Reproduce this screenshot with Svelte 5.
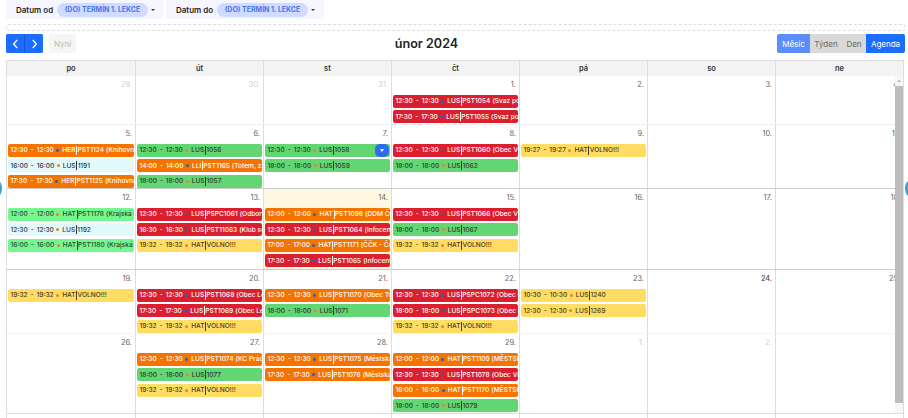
<script>
  const dayNames = ["po", "út", "st", "čt", "pá", "so", "ne"];

  // kind: r = red, o = orange, g = green, l = light green, c = cyan, y = yellow
  const ev = (kind, time, who, code, note = "") => ({ kind, time, who, code, note });

  const weeks = [
    {
      cls: "w1",
      days: [
        { n: "29.", off: true },
        { n: "30.", off: true },
        { n: "31.", off: true },
        {
          n: "1.",
          events: [
            ev("r", "12:30 - 12:30", "LUS", "PST1054", "(Svaz postižených civilizačními)"),
            ev("r", "17:30 - 17:30", "LUS", "PST1055", "(Svaz postižených civilizačními)"),
          ],
        },
        { n: "2." },
        { n: "3." },
        { n: "4." },
      ],
    },
    {
      cls: "w2",
      days: [
        {
          n: "5.",
          events: [
            ev("o", "12:30 - 12:30", "HER", "PST1124", "(Knihovna města Plzně)"),
            ev("c", "16:00 - 16:00", "LUS", "1191"),
            ev("o", "17:30 - 17:30", "HER", "PST1125", "(Knihovna města Plzně)"),
          ],
        },
        {
          n: "6.",
          events: [
            ev("g", "12:30 - 12:30", "LUS", "1056"),
            ev("o", "14:00 - 14:00", "LLI", "PST1165", "(Totem, z.s. Plzeň)"),
            ev("g", "18:00 - 18:00", "LUS", "1057"),
          ],
        },
        {
          n: "7.",
          events: [ev("g", "12:30 - 12:30", "LUS", "1058"), ev("g", "18:00 - 18:00", "LUS", "1059")],
          menu: true,
        },
        {
          n: "8.",
          events: [
            ev("r", "12:30 - 12:30", "LUS", "PST1060", "(Obec Vinařice u Kladna)"),
            ev("g", "18:00 - 18:00", "LUS", "1062"),
          ],
        },
        { n: "9.", events: [ev("y", "19:27 - 19:27", "HAT", "VOLNO!!!")] },
        { n: "10." },
        { n: "11." },
      ],
    },
    {
      cls: "w3",
      days: [
        {
          n: "12.",
          events: [
            ev("l", "12:00 - 12:00", "HAT", "PST1178", "(Krajská vědecká knihovna)"),
            ev("c", "12:30 - 12:30", "LUS", "1192"),
            ev("l", "16:00 - 16:00", "HAT", "PST1180", "(Krajská vědecká knihovna)"),
          ],
        },
        {
          n: "13.",
          events: [
            ev("r", "12:30 - 12:30", "LUS", "PSPC1061", "(Odbor sociálních věcí)"),
            ev("r", "16:30 - 16:30", "LUS", "PST11063", "(Klub seniorů Plzeň)"),
            ev("y", "19:32 - 19:32", "HAT", "VOLNO!!!"),
          ],
        },
        {
          n: "14.",
          today: true,
          events: [
            ev("o", "12:00 - 12:00", "HAT", "PST1098", "(DDM Čelákovice)"),
            ev("r", "12:30 - 12:30", "LUS", "PST1064", "(Infocentrum Beroun)"),
            ev("o", "17:00 - 17:00", "HAT", "PST1171", "(ČČK - Český červený)"),
            ev("r", "17:30 - 17:30", "LUS", "PST1065", "(Infocentrum Beroun)"),
          ],
        },
        {
          n: "15.",
          events: [
            ev("r", "12:30 - 12:30", "LUS", "PST1066", "(Obec Vinařice u Kladna)"),
            ev("g", "18:00 - 18:00", "LUS", "1067"),
            ev("y", "19:32 - 19:32", "HAT", "VOLNO!!!"),
          ],
        },
        { n: "16." },
        { n: "17." },
        { n: "18." },
      ],
    },
    {
      cls: "w4",
      days: [
        { n: "19.", events: [ev("y", "19:32 - 19:32", "HAT", "VOLNO!!!")] },
        {
          n: "20.",
          events: [
            ev("r", "12:30 - 12:30", "LUS", "PST1068", "(Obec Letkov u Plzně)"),
            ev("r", "17:30 - 17:30", "LUS", "PST1069", "(Obec Letkov u Plzně)"),
            ev("y", "19:32 - 19:32", "HAT", "VOLNO!!!"),
          ],
        },
        {
          n: "21.",
          events: [
            ev("o", "12:30 - 12:30", "LUS", "PST1070", "(Obec Tuřany u Kladna)"),
            ev("g", "18:00 - 18:00", "LUS", "1071"),
          ],
        },
        {
          n: "22.",
          events: [
            ev("r", "12:30 - 12:30", "LUS", "PSPC1072", "(Obec Lety u Dobřichovic)"),
            ev("r", "18:00 - 18:00", "LUS", "PSPC1073", "(Obec Kly u Mělníka)"),
            ev("y", "19:32 - 19:32", "HAT", "VOLNO!!!"),
          ],
        },
        {
          n: "23.",
          events: [ev("y", "10:30 - 10:30", "LUS", "1240"), ev("y", "12:30 - 12:30", "LUS", "1269")],
        },
        { n: "24.", strong: true },
        { n: "25." },
      ],
    },
    {
      cls: "w5",
      days: [
        { n: "26." },
        {
          n: "27.",
          events: [
            ev("o", "12:30 - 12:30", "LUS", "PST1074", "(KC Prádelna Bohnice)"),
            ev("g", "18:00 - 18:00", "LUS", "1077"),
            ev("y", "19:32 - 19:32", "HAT", "VOLNO!!!"),
          ],
        },
        {
          n: "28.",
          events: [
            ev("o", "12:30 - 12:30", "LUS", "PST1075", "(Městská knihovna Kralupy)"),
            ev("o", "17:30 - 17:30", "LUS", "PST1076", "(Městská knihovna Kralupy)"),
          ],
        },
        {
          n: "29.",
          events: [
            ev("o", "12:00 - 12:00", "HAT", "PST1109", "(MĚSTSKÁ KNIHOVNA)"),
            ev("r", "12:30 - 12:30", "LUS", "PST1078", "(Obec Vinařice u Kladna)"),
            ev("o", "16:00 - 16:00", "HAT", "PST1170", "(MĚSTSKÁ KNIHOVNA)"),
            ev("g", "18:00 - 18:00", "LUS", "1079"),
          ],
        },
        { n: "1.", off: true },
        { n: "2.", off: true },
        { n: "3.", off: true, hidden: true },
      ],
    },
  ];
</script>

<div class="page">
  <div class="filters">
    <div class="filter">
      <span class="filter-label">Datum od</span>
      <span class="chip">(DO) TERMÍN 1. LEKCE</span>
      <span class="caret"></span>
    </div>
    <div class="filter">
      <span class="filter-label">Datum do</span>
      <span class="chip">(DO) TERMÍN 1. LEKCE</span>
      <span class="caret"></span>
    </div>
  </div>

  <div class="dropzone"></div>

  <div class="toolbar">
    <div class="tool-left">
      <div class="nav">
        <button aria-label="Předchozí">
          <svg width="7" height="10" viewBox="0 0 7 10"><path d="M5.2 1 1.6 5l3.6 4" /></svg>
        </button>
        <button aria-label="Další">
          <svg width="7" height="10" viewBox="0 0 7 10"><path d="M1.8 1 5.4 5 1.8 9" /></svg>
        </button>
      </div>
      <button class="now">Nyní</button>
    </div>
    <h2>únor 2024</h2>
    <div class="views">
      <button class="v-month">Měsíc</button>
      <button class="v-week">Týden</button>
      <button class="v-day">Den</button>
      <button class="v-agenda">Agenda</button>
    </div>
  </div>

  <div class="calendar">
    <div class="head">
      {#each dayNames as d}
        <div class="head-cell">{d}</div>
      {/each}
    </div>
    {#each weeks as week}
      <div class="week {week.cls}">
        {#each week.days as day}
          <div class="day" class:today={day.today}>
            <div class="num" class:off={day.off} class:strong={day.strong}>
              {#if !day.hidden}{day.n}{/if}
            </div>
            {#each day.events ?? [] as e, i}
              <div class="event {e.kind}">
                <span class="time">{e.time}</span>
                <i class="dot"></i>
                <span class="who">{e.who}</span><span class="sep"></span><span class="code">{e.code}</span>
                {#if e.note}<span class="note">{e.note}</span>{/if}
                {#if day.menu && i === 0}
                  <span class="menu"><span class="menu-caret"></span></span>
                {/if}
              </div>
            {/each}
          </div>
        {/each}
      </div>
    {/each}
    <div class="tail">
      {#each dayNames as d}
        <div class="tail-cell"></div>
      {/each}
    </div>
    <div class="scrollbar">
      <span class="arrow"></span>
      <span class="thumb"></span>
    </div>
  </div>

  <span class="handle left"></span>
  <span class="handle right"></span>
</div>

<style>
  :global(body) {
    margin: 0;
    background: #fff;
    overflow: hidden;
  }

  .page {
    position: relative;
    width: 908px;
    height: 418px;
    overflow: hidden;
    font-family: Inter, "Liberation Sans", sans-serif;
    color: #222;
    box-sizing: border-box;
    padding: 0 3px 0 6px;
  }

  button {
    font-family: inherit;
    border: 0;
    margin: 0;
    padding: 0;
  }

  .filters {
    display: flex;
    gap: 2px;
    height: 19px;
  }
  .filter {
    display: flex;
    align-items: center;
    width: 158px;
    box-sizing: border-box;
    padding-left: 10px;
    background: #f5f6ff;
    border-radius: 2px;
  }
  .filter-label {
    font-size: 8px;
    font-weight: 600;
    color: #1f1f1f;
    width: 41px;
    white-space: nowrap;
  }
  .chip {
    width: 91px;
    height: 14px;
    line-height: 14px;
    text-align: center;
    border-radius: 7px;
    background: #d0dcff;
    color: #4a72ea;
    font-size: 7px;
    font-weight: 700;
    white-space: nowrap;
  }
  .caret {
    margin-left: 3px;
    border: 2px solid transparent;
    border-top: 2.5px solid #333;
    border-bottom: 0;
  }

  .dropzone {
    margin-top: 5px;
    height: 5px;
    border: 1px dashed #ddd;
    border-radius: 2px;
  }

  .toolbar {
    display: flex;
    justify-content: space-between;
    align-items: center;
    margin-top: 3px;
    height: 19px;
    margin-bottom: 7px;
  }
  .tool-left {
    display: flex;
    gap: 6px;
  }
  .nav {
    display: flex;
    width: 37px;
    height: 19px;
    border-radius: 2px;
    overflow: hidden;
    background: #1a6dff;
  }
  .nav button {
    flex: 1;
    background: #1a6dff;
    display: flex;
    align-items: center;
    justify-content: center;
  }
  .nav button + button {
    border-left: 1px solid #1557cf;
  }
  .nav path {
    fill: none;
    stroke: #fff;
    stroke-width: 1.3;
  }
  .now {
    width: 27px;
    height: 19px;
    background: #f5f5f5;
    color: #b8b8b8;
    border-radius: 2px;
    font-size: 8px;
  }
  h2 {
    margin: 0;
    font-size: 12.6px;
    font-weight: 600;
    line-height: 19px;
    color: #222;
  }
  .views {
    display: flex;
    height: 19px;
    border-radius: 2px;
    overflow: hidden;
    font-size: 8px;
  }
  .views button {
    font-size: 8px;
    height: 19px;
    background: #d9d9d9;
    color: #666;
  }
  .views .v-month {
    width: 33px;
    background: #5c8dff;
    color: #fff;
  }
  .v-week {
    width: 32px;
  }
  .v-day {
    width: 24px;
  }
  .views .v-agenda {
    width: 39px;
    background: #1a6dff;
    color: #fff;
  }

  .calendar {
    position: relative;
    width: 898px;
    height: 358px;
    box-sizing: border-box;
    border-left: 1px solid #ddd;
    border-right: 1px solid #ddd;
    overflow: hidden;
  }
  .head {
    display: grid;
    grid-template-columns: repeat(7, 128px);
    height: 16px;
    box-sizing: border-box;
    background: #f3f3f3;
    border-top: 1px solid #ddd;
  }
  .head-cell {
    font-size: 7.5px;
    font-weight: 600;
    line-height: 15px;
    text-align: center;
    color: #333;
  }
  .head-cell + .head-cell {
    border-left: 1px solid #ddd;
  }

  .week {
    display: grid;
    grid-template-columns: repeat(7, 128px);
    box-sizing: border-box;
  }
  .w1 {
    height: 49px;
    border-bottom: 1px solid #eee;
  }
  .w2 {
    height: 64px;
    border-bottom: 1px solid #ccc;
  }
  .w3 {
    height: 81px;
    border-bottom: 1px solid #ccc;
  }
  .w4 {
    height: 64px;
    border-bottom: 1px solid #f4f4f4;
  }
  .w5 {
    height: 80px;
    border-bottom: 1px solid #ddd;
  }

  .day {
    min-width: 0;
    box-sizing: border-box;
    padding: 0 1px;
    overflow: hidden;
  }
  .day + .day {
    border-left: 1px solid #ddd;
  }
  .today {
    background: #fff8e1;
  }
  .num {
    height: 19px;
    padding: 3.5px 2px 0 0;
    box-sizing: border-box;
    text-align: right;
    font-size: 7.4px;
    line-height: 10px;
    color: #666;
  }
  .num.off {
    color: #d0d0d0;
  }
  .num.strong {
    color: #333;
  }

  .event {
    position: relative;
    display: flex;
    align-items: center;
    height: 12.8px;
    margin-bottom: 2.7px;
    padding-left: 2.5px;
    border-radius: 2px;
    font-size: 6.6px;
    font-weight: 500;
    white-space: nowrap;
    overflow: hidden;
  }
  .r {
    background: #dc1f2e;
    color: #fff;
  }
  .o {
    background: #f57400;
    color: #fff;
  }
  .g {
    background: #62d672;
    color: #2c3a2c;
  }
  .l {
    background: #74f78e;
    color: #2c4a32;
  }
  .c {
    background: #e2f9fc;
    color: #2b3550;
  }
  .y {
    background: #ffdd63;
    color: #4a3a20;
  }
  .time {
    word-spacing: 1.2px;
  }
  .dot {
    flex: none;
    width: 3px;
    height: 3px;
    border-radius: 50%;
    margin: 0 3.2px 0 2.3px;
    background: #ff7a20;
  }
  .r .dot,
  .o .dot {
    background: #1468c8;
  }
  .sep {
    flex: none;
    width: 0.8px;
    height: 9px;
    margin: 0 0.6px;
    background: currentColor;
  }
  .note {
    margin-left: 2px;
  }
  .menu {
    position: absolute;
    right: 1px;
    top: 0;
    width: 14px;
    height: 12.8px;
    border-radius: 5px;
    background: #2f6df0;
    display: flex;
    align-items: center;
    justify-content: center;
  }
  .menu-caret {
    border: 2.5px solid transparent;
    border-top: 3px solid #fff;
    border-bottom: 0;
  }

  .tail {
    display: grid;
    grid-template-columns: repeat(7, 128px);
    height: 6px;
  }
  .tail-cell + .tail-cell {
    border-left: 1px solid #ddd;
  }

  .scrollbar {
    position: absolute;
    top: 16px;
    right: 0;
    bottom: 5px;
    width: 8px;
    background: #f6f6f6;
    display: flex;
    flex-direction: column;
  }
  .arrow {
    height: 10px;
    flex: none;
    position: relative;
  }
  .arrow::after {
    content: "";
    position: absolute;
    left: 2px;
    top: 4px;
    border: 2px solid transparent;
    border-bottom: 2px solid #aaa;
    border-top: 0;
  }
  .thumb {
    flex: 1;
    margin-bottom: 10px;
    background: #bdbdbd;
  }

  .handle {
    position: absolute;
    top: 181px;
    width: 8px;
    height: 15px;
    border-radius: 50%;
    background: #3f9fd0;
  }
  .handle.left {
    left: -6px;
  }
  .handle.right {
    right: -5px;
  }
</style>
